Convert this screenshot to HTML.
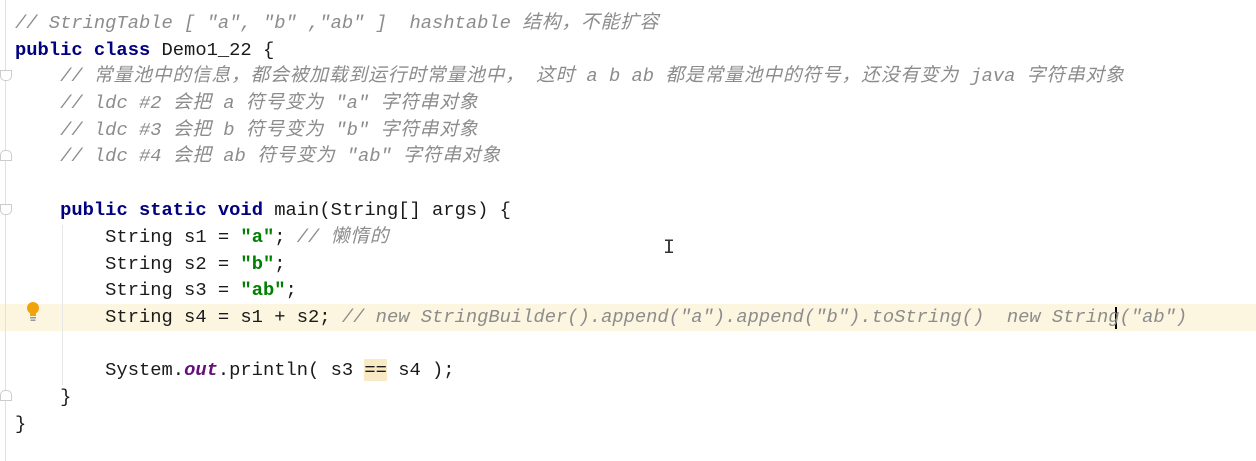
<!DOCTYPE html>
<html><head><meta charset="utf-8"><style>
html,body{margin:0;padding:0;background:#fff;width:1256px;height:461px;overflow:hidden;position:relative}
.l{position:absolute;left:15px;white-space:pre;font-family:"Liberation Mono","Noto Sans CJK SC",monospace;font-size:18.8px;line-height:26.7px;color:#1a1a1a}
.c{color:#8c8c8c;font-style:italic}
.z{letter-spacing:0.8px}
.k{color:#000080;font-weight:bold}
.s{color:#008000;font-weight:bold}
.o{color:#660e7a;font-style:italic;font-weight:bold}
.hl{position:absolute;left:0;top:304px;width:1256px;height:27px;background:#fcf6e0}
.gut{position:absolute;left:5px;top:0;width:1px;height:461px;background:#e0e0e0}
.fold{position:absolute;left:0;width:10px;height:9px;border:1px solid #ccc;background:#fff;border-radius:0 0 5px 5px}
.guide{position:absolute;left:62px;top:225px;width:1px;height:160px;background:#e6e6e6}
</style></head><body>
<div class="hl"></div>
<div class="gut"></div>
<div class="guide"></div>
<div class="fold" style="top:70px"></div>
<div class="fold" style="top:150px;border-radius:5px 5px 0 0"></div>
<div class="fold" style="top:204px"></div>
<div class="fold" style="top:390px;border-radius:5px 5px 0 0"></div>
<svg style="position:absolute;left:25px;top:301px" width="16" height="22" viewBox="0 0 16 22"><circle cx="8" cy="7" r="6" fill="#f0a30a"/><rect x="5" y="12" width="6" height="3" fill="#f0a30a"/><rect x="5" y="16" width="6" height="1.5" fill="#999"/><rect x="5.5" y="18.5" width="5" height="1.5" fill="#999"/></svg>
<div style="position:absolute;left:1115px;top:307px;width:2px;height:22px;background:#000"></div>
<div class="l" style="top:10px"><span class="c">// StringTable [ "a", "b" ,"ab" ]  hashtable <span class="z">结构，不能扩容</span></span></div>
<div class="l" style="top:37px"><span class="k">public class</span> Demo1_22 {</div>
<div class="l" style="top:63px">    <span class="c">// <span class="z">常量池中的信息，都会被加载到运行时常量池中，</span> <span class="z">这时</span> a b ab <span class="z">都是常量池中的符号，还没有变为</span> java <span class="z">字符串对象</span></span></div>
<div class="l" style="top:90px">    <span class="c">// ldc #2 <span class="z">会把</span> a <span class="z">符号变为</span> "a" <span class="z">字符串对象</span></span></div>
<div class="l" style="top:117px">    <span class="c">// ldc #3 <span class="z">会把</span> b <span class="z">符号变为</span> "b" <span class="z">字符串对象</span></span></div>
<div class="l" style="top:143px">    <span class="c">// ldc #4 <span class="z">会把</span> ab <span class="z">符号变为</span> "ab" <span class="z">字符串对象</span></span></div>
<div class="l" style="top:197px">    <span class="k">public static void</span> main(String[] args) {</div>
<div class="l" style="top:224px">        String s1 = <span class="s">"a"</span>; <span class="c">// <span class="z">懒惰的</span></span></div>
<div class="l" style="top:251px">        String s2 = <span class="s">"b"</span>;</div>
<div class="l" style="top:277px">        String s3 = <span class="s">"ab"</span>;</div>
<div class="l" style="top:304px">        String s4 = s1 + s2; <span class="c">// new StringBuilder().append("a").append("b").toString()  new String("ab")</span></div>
<div class="l" style="top:357px">        System.<span class="o">out</span>.println( s3 <span style="background:#f7eac4">==</span> s4 );</div>
<div class="l" style="top:384px">    }</div>
<div class="l" style="top:411px">}</div>
<div style="position:absolute;left:663px;top:237px;font-family:'Liberation Mono',monospace;font-size:20px;color:#333">I</div>
</body></html>
